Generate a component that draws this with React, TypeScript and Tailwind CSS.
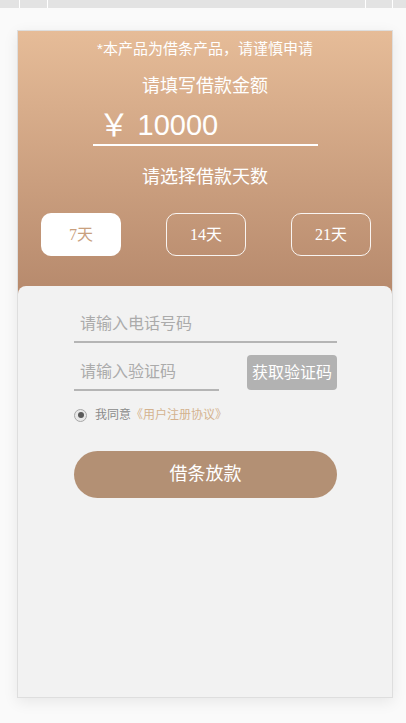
import { useState } from "react";

const days = ["7天", "14天", "21天"];

export default function App() {
  const [sel, setSel] = useState(0);
  const [agree] = useState(true);

  return (
    <div
      className="h-[723px] w-[406px] overflow-hidden bg-[#fafafa]"
      style={{ fontFamily: '"Liberation Sans", "Noto Sans CJK SC", sans-serif' }}
    >
      {/* top strip */}
      <div className="flex h-[8px] bg-[#e3e3e3]">
        <div className="ml-[19px] w-px bg-white" />
        <div className="ml-[27px] w-px bg-white" />
        <div className="ml-[317px] w-px bg-white" />
        <div className="ml-[26px] w-px bg-white" />
      </div>

      {/* card */}
      <div className="ml-[17px] mt-[22px] flex h-[668px] w-[376px] flex-col border border-[#dedede] bg-[#f2f2f2] shadow-[0_4px_14px_rgba(0,0,0,0.08)]">
        {/* header */}
        <div className="flex h-[265px] shrink-0 flex-col items-center bg-gradient-to-b from-[#e6bc98] to-[#b6896c] text-white">
          <p className="mt-[8px] text-[15px] leading-[20px]">*本产品为借条产品，请谨慎申请</p>
          <p className="mt-[14px] text-[18px] leading-[26px]">请填写借款金额</p>
          <div className="mt-[7px] flex h-[40px] w-[225px] items-center border-b-2 border-white pl-[6px]">
            <span className="text-[31px] leading-none" style={{ fontFamily: '"Liberation Serif", "Noto Sans CJK SC", serif' }}>
              ￥
            </span>
            <span className="ml-[8px] text-[29px] leading-none">10000</span>
          </div>
          <p className="mt-[18px] text-[18px] leading-[26px]">请选择借款天数</p>
          <div className="mt-[23px] flex w-full gap-[45px] pl-[23px]">
            {days.map((d, i) => (
              <button
                key={d}
                onClick={() => setSel(i)}
                className={
                  i === sel
                    ? "h-[43px] w-[80px] rounded-[10px] bg-white text-[16px] text-[#c9a07e]"
                    : "h-[43px] w-[80px] rounded-[10px] border border-white/90 text-[16px] text-white"
                }
                style={{ fontFamily: '"Liberation Serif", "Noto Sans CJK SC", serif' }}
              >
                {d}
              </button>
            ))}
          </div>
        </div>

        {/* form panel */}
        <div className="relative -mt-[10px] flex flex-1 flex-col rounded-t-[8px] bg-[#f2f2f2] px-[56px]">
          <div className="mt-[21px] flex h-[36px] w-[263px] items-center border-b-2 border-[#b5b5b5] pl-[6px]">
            <span className="text-[16px] text-[#ababab]">请输入电话号码</span>
          </div>
          <div className="mt-[12px] flex w-[263px] items-end justify-between">
            <div className="flex h-[36px] w-[145px] items-center border-b-2 border-[#b5b5b5] pl-[6px]">
              <span className="text-[16px] text-[#ababab]">请输入验证码</span>
            </div>
            <button className="mb-[1px] h-[35px] w-[90px] rounded-[4px] bg-[#b2b2b2] text-[16px] text-white">
              获取验证码
            </button>
          </div>
          <div className="mt-[15px] flex items-center">
            <span className="flex h-[13px] w-[13px] items-center justify-center rounded-full border border-[#a8a8a8] bg-[#e8e8e8]">
              {agree && <span className="h-[6px] w-[6px] rounded-full bg-[#5a5a5a]" />}
            </span>
            <span className="ml-[8px] text-[12px] text-[#8a8a8a]">我同意</span>
            <span className="text-[12px] text-[#d4b28f]">《用户注册协议》</span>
          </div>
          <button className="mt-[27px] h-[47px] w-[263px] rounded-full bg-[#b39074] text-[18px] text-white">
            借条放款
          </button>
        </div>
      </div>
    </div>
  );
}
